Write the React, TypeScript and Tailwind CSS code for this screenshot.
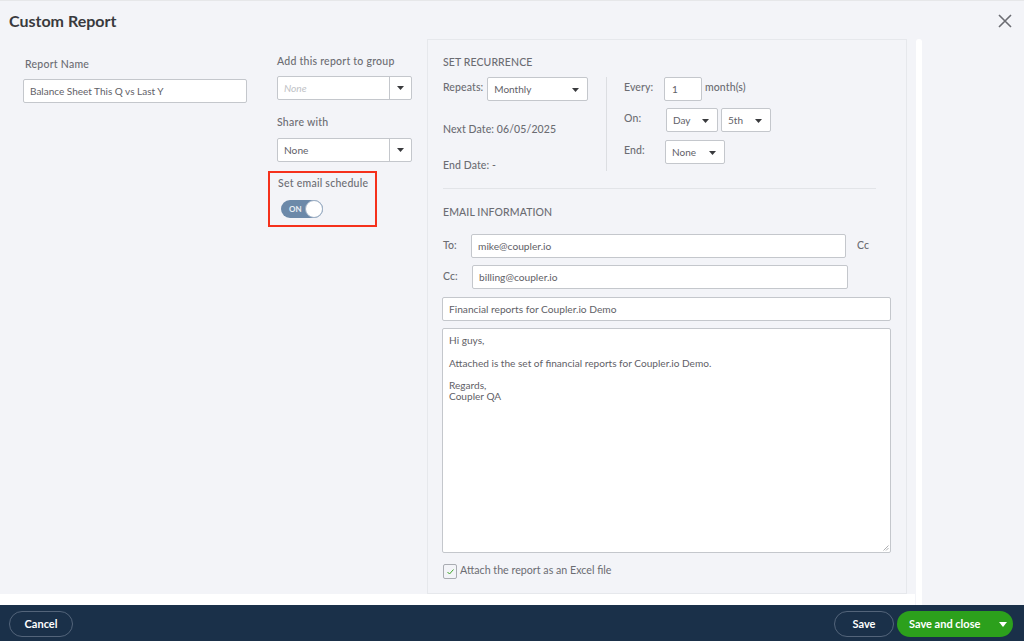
import React from 'react';

const Caret = ({ className = '' }: { className?: string }) => (
  <svg width="7" height="4" viewBox="0 0 7 4" className={className}>
    <path d="M0 0h7L3.5 4z" fill="#393a3d" />
  </svg>
);

const Box = ({ className = '', children }: { className?: string; children?: React.ReactNode }) => (
  <div className={`flex items-center bg-white border border-[#c4c7cc] rounded-[2px] text-[#5f6167] pt-[1px] ${className}`}>
    {children}
  </div>
);

const Select = ({ label, className = '' }: { label: string; className?: string }) => (
  <Box className={`justify-between pl-[6px] pr-[8px] text-[10px] font-normal tracking-normal ${className}`}>
    <span>{label}</span>
    <Caret />
  </Box>
);

const ComboBox = ({ label, italic }: { label: string; italic?: boolean }) => (
  <div className="flex items-stretch h-[24px] w-[135px] bg-white border border-[#c4c7cc] rounded-[2px] text-[10.2px]">
    <span className={`flex-1 flex items-center pl-[6px] pt-[1px] ${italic ? 'italic text-[#c0c2c6]' : 'text-[#5f6167]'}`}>{label}</span>
    <span className="w-[22px] flex items-center justify-center border-l border-[#c4c7cc]">
      <Caret />
    </span>
  </div>
);

export default function App() {
  return (
    <div className="w-[1024px] h-[641px] overflow-hidden flex flex-col bg-[#f3f4f8] font-['Lato',sans-serif] text-[#6b6c72]">
      {/* 상단 */}
      <header className="h-[39px] shrink-0 border-t border-[#e6e7e9] flex items-start justify-between pl-[9px] pr-[11px]">
        <h1 className="mt-[10px] text-[16px] leading-[20px] font-bold text-[#393a3d]">Custom Report</h1>
        <svg width="16" height="16" viewBox="0 0 16 16" className="mt-[12px]">
          <path d="M2 2l12 12M14 2L2 14" stroke="#6b6c72" strokeWidth="1.6" fill="none" />
        </svg>
      </header>

      <div className="h-[566px] shrink-0 flex">
        <div className="w-[915px] flex flex-col">
          <div className="h-[555px] flex">
            {/* Report name */}
            <div className="w-[254px] pl-[23px] pt-[18px]">
              <div className="pl-[2px] text-[10.5px] leading-[14px] font-medium tracking-[0.25px]">Report Name</div>
              <Box className="mt-[8px] h-[24px] w-[224px] pl-[6px] text-[10px]">Balance Sheet This Q vs Last Y</Box>
            </div>

            {/* Group / share */}
            <div className="w-[173px] pl-[23px] pt-[15px]">
              <div className="text-[10.5px] leading-[14px] font-medium tracking-[0.25px] whitespace-nowrap">Add this report to group</div>
              <div className="mt-[8px]"><ComboBox label="None" italic /></div>
              <div className="mt-[15px] text-[10.5px] leading-[14px] font-medium tracking-[0.25px]">Share with</div>
              <div className="mt-[9px]"><ComboBox label="None" /></div>
              <div className="mt-[9px] -ml-[9px] w-[109px] h-[56px] border-2 border-[#f5311c] pl-[8px] pt-[3px]">
                <div className="text-[10.5px] leading-[14px] font-medium tracking-[0.25px] whitespace-nowrap">Set email schedule</div>
                <div className="mt-[10px] ml-[3px] w-[42px] h-[18px] rounded-full bg-[#6c89a9] flex items-center justify-between pl-[8px]">
                  <span className="text-[8px] font-bold text-[#e8edf3]">ON</span>
                  <span className="w-[18px] h-[18px] rounded-full bg-white border border-[#9fb1c6]" />
                </div>
              </div>
            </div>

            {/* Recurrence + email */}
            <div className="w-[480px] border border-[#e6e8ec] pl-[15px] pr-[15px] pt-[15px] flex flex-col">
              <div className="text-[10.5px] leading-[14px] font-medium tracking-[0.1px]">SET RECURRENCE</div>
              <div className="mt-[8px] flex h-[94px] text-[10.5px] font-medium tracking-[0.1px]">
                <div className="w-[164px] border-r border-[#dcdee2]">
                  <div className="flex items-start">
                    <span className="leading-[14px] mt-[3px]">Repeats:</span>
                    <Select label="Monthly" className="ml-[4px] w-[101px] h-[24px]" />
                  </div>
                  <div className="mt-[21px] leading-[14px]">Next Date: 06/05/2025</div>
                  <div className="mt-[22px] leading-[14px]">End Date: -</div>
                </div>
                <div className="pl-[17px]">
                  <div className="flex items-start h-[24px]">
                    <span className="w-[40px] leading-[14px] mt-[3px]">Every:</span>
                    <Box className="w-[38px] h-[24px] pl-[7px] text-[10px] font-normal">1</Box>
                    <span className="ml-[3px] leading-[14px] mt-[3px]">month(s)</span>
                  </div>
                  <div className="mt-[7px] flex items-start h-[24px]">
                    <span className="w-[42px] leading-[14px] mt-[3px]">On:</span>
                    <Select label="Day" className="w-[52px] h-[24px]" />
                    <Select label="5th" className="ml-[3px] w-[50px] h-[24px]" />
                  </div>
                  <div className="mt-[8px] flex items-start h-[24px]">
                    <span className="w-[41px] leading-[14px] mt-[3px]">End:</span>
                    <Select label="None" className="w-[60px] h-[24px]" />
                  </div>
                </div>
              </div>
              <div className="mt-[17px] w-[433px] border-t border-[#e2e4e8]" />

              <div className="mt-[16px] text-[10.5px] leading-[14px] font-medium tracking-[0.1px]">EMAIL INFORMATION</div>
              <div className="mt-[15px] flex items-center h-[24px]">
                <span className="w-[28px] text-[10.5px] font-medium">To:</span>
                <Box className="w-[375px] h-[24px] pl-[6px] text-[10.2px]">mike@coupler.io</Box>
                <span className="ml-[11px] text-[10.5px] font-medium">Cc</span>
              </div>
              <div className="mt-[7px] flex items-center h-[24px]">
                <span className="w-[29px] text-[10.5px] font-medium">Cc:</span>
                <Box className="w-[376px] h-[24px] pl-[6px] text-[10.2px]">billing@coupler.io</Box>
              </div>
              <Box className="mt-[8px] -ml-[1px] w-[449px] h-[24px] pl-[6px] shrink-0 text-[10.2px]">Financial reports for Coupler.io Demo</Box>
              <div className="mt-[7px] -ml-[1px] w-[449px] h-[225px] shrink-0 bg-white border border-[#c4c7cc] rounded-[2px] px-[6px] pt-[6px] text-[10.1px] leading-[11.25px] text-[#5f6167] relative">
                <p>Hi guys,</p>
                <p className="mt-[11.25px]">Attached is the set of financial reports for Coupler.io Demo.</p>
                <p className="mt-[11.25px]">Regards,</p>
                <p>Coupler QA</p>
                <svg width="6" height="6" viewBox="0 0 6 6" className="absolute right-[1px] bottom-[1px]">
                  <path d="M0.5 5.5l5-5M3 5.5l2.5-2.5" stroke="#8a8c90" strokeWidth="0.7" fill="none" />
                </svg>
              </div>
              <div className="mt-[11px] flex items-start">
                <span className="w-[14px] h-[15px] bg-[#f3f4f8] border border-[#a9acb2] rounded-[2px] flex items-center justify-center">
                  <svg width="9" height="9" viewBox="0 0 9 9">
                    <path d="M1.5 5l2 2L7.5 2.5" stroke="#3fa52a" strokeWidth="1" fill="none" />
                  </svg>
                </span>
                <span className="ml-[3px] -mt-[1px] text-[10.7px] leading-[13px]">Attach the report as an Excel file</span>
              </div>
            </div>
          </div>
          <div className="h-[11px] bg-white" />
        </div>
        <div className="ml-[1px] w-[6px] bg-white rounded-t-[3px]" />
      </div>

      {/* 하단 바 */}
      <footer className="flex-1 bg-[#1a3049] flex items-center justify-between pl-[9px] pr-[11px] pt-[2px] text-[11px] font-bold text-white">
        <button className="w-[64px] h-[26px] rounded-full border border-[#53647a]">Cancel</button>
        <div className="flex items-center gap-[3px]">
          <button className="w-[60px] h-[26px] rounded-full border border-[#53647a]">Save</button>
          <button className="w-[116px] h-[26px] rounded-full bg-[#2ca01c] flex items-center justify-between pl-[12px] pr-[6px]">
            <span>Save and close</span>
            <svg width="8" height="5" viewBox="0 0 8 5"><path d="M0 0h8L4 5z" fill="#fff" /></svg>
          </button>
        </div>
      </footer>
    </div>
  );
}
